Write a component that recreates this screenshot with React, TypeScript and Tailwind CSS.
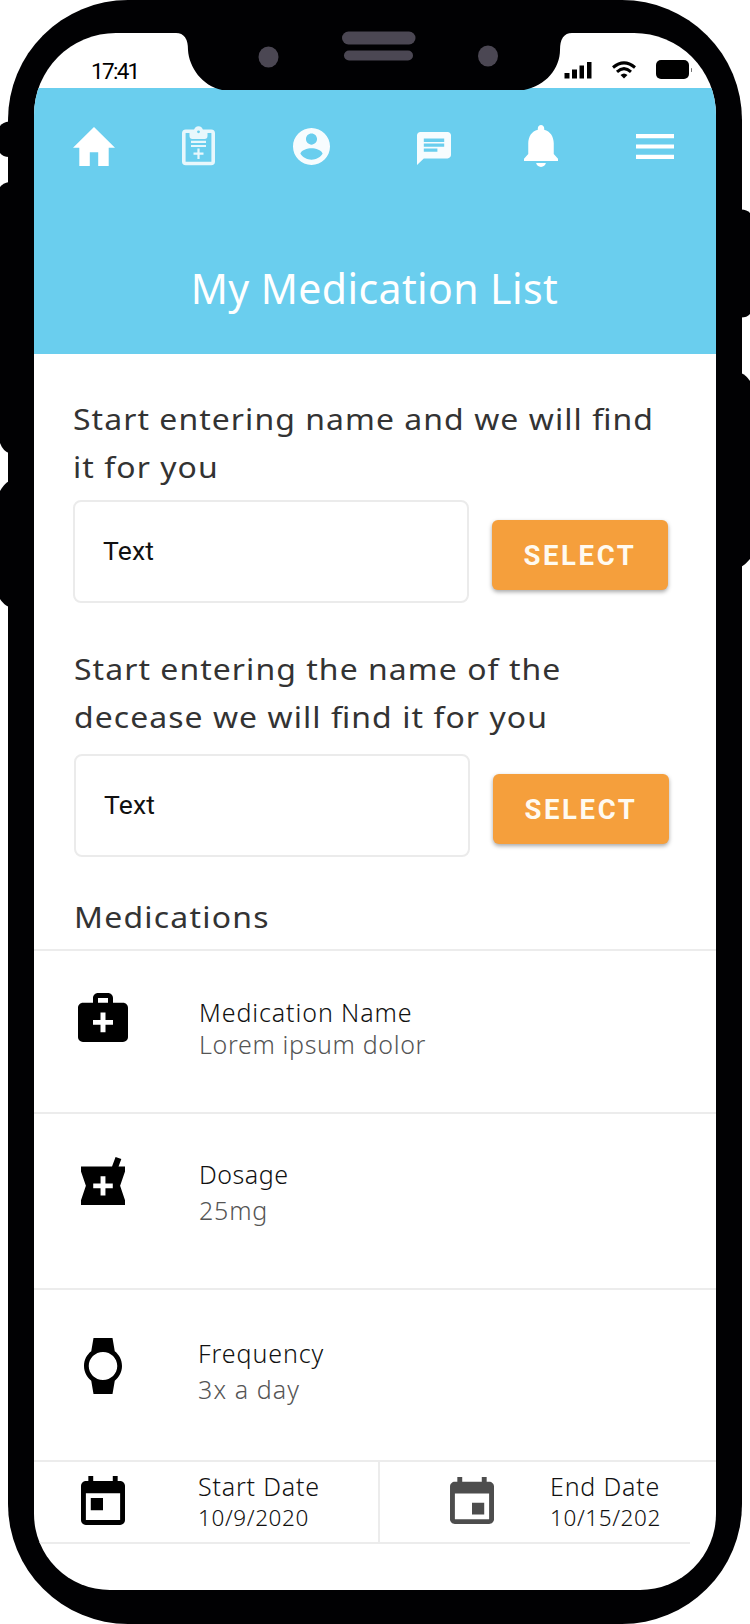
import React from "react";
import type { ReactNode } from "react";

type GlyphProps = { box: string; d: string; className: string };

function Glyph({ box, d, className }: GlyphProps) {
  return (
    <svg viewBox={box} preserveAspectRatio="none" fill="currentColor" className={`block shrink-0 ${className}`} aria-hidden="true">
      <path d={d} />
    </svg>
  );
}

const HOME = "M10 20v-6h4v6h5v-8h3L12 3 2 12h3v8z";
const ACCOUNT =
  "M12 2C6.48 2 2 6.48 2 12s4.48 10 10 10 10-4.48 10-10S17.52 2 12 2zm0 3c1.66 0 3 1.34 3 3s-1.34 3-3 3-3-1.34-3-3 1.34-3 3-3zm0 14.2c-2.5 0-4.71-1.28-6-3.22.03-1.99 4-3.08 6-3.08 1.99 0 5.97 1.09 6 3.08-1.29 1.94-3.5 3.22-6 3.22z";
const CHAT =
  "M20 2H4c-1.1 0-1.99.9-1.99 2L2 22l4-4h14c1.1 0 2-.9 2-2V4c0-1.1-.9-2-2-2zM6 9h12v2H6V9zm8 5H6v-2h8v2zm4-6H6V6h12v2z";
const BELL =
  "M12 22c1.2 0 2.1-.7 2.3-1.8H9.7C9.9 21.3 10.8 22 12 22zm6-6v-5c0-3.07-1.64-5.64-4.5-6.32V4c0-.83-.67-1.5-1.5-1.5s-1.5.67-1.5 1.5v.68C7.63 5.36 6 7.92 6 11v5l-2 2.2v1h16v-1L18 16z";
const MENU = "M0 0h38v4H0zM0 10h38v4H0zM0 20h38v4H0z";
const CASE =
  "M20 6h-4V4c0-1.1-.9-2-2-2h-4c-1.1 0-2 .9-2 2v2H4c-1.1 0-2 .9-2 2v12c0 1.1.9 2 2 2h16c1.1 0 2-.9 2-2V8c0-1.1-.9-2-2-2zM10 4h4v2h-4V4zm6 11h-3v3h-2v-3H8v-2h3v-3h2v3h3v2z";
const MORTAR =
  "M21 5h-2.64l1.14-3.14L17.15 1l-1.46 4H3v2l2 6-2 6v2h18v-2l-2-6 2-6V5zm-5 9h-3v3h-2v-3H8v-2h3V9h2v3h3v2z";
const WATCH =
  "M20 12c0-2.54-1.19-4.81-3.04-6.27L16 0H8l-.95 5.73C5.19 7.19 4 9.45 4 12s1.19 4.81 3.05 6.27L8 24h8l.96-5.73C18.81 16.81 20 14.54 20 12zM6 12c0-3.31 2.69-6 6-6s6 2.69 6 6-2.69 6-6 6-6-2.69-6-6z";
const TODAY =
  "M19 3h-1V1h-2v2H8V1H6v2H5c-1.11 0-1.99.9-1.99 2L3 19c0 1.1.89 2 2 2h14c1.1 0 2-.9 2-2V5c0-1.1-.9-2-2-2zm0 16H5V8h14v11zM7 10h5v5H7z";
const EVENT =
  "M17 12h-5v5h5v-5zM16 1v2H8V1H6v2H5c-1.11 0-1.99.9-1.99 2L3 19c0 1.1.89 2 2 2h14c1.1 0 2-.9 2-2V5c0-1.1-.9-2-2-2h-1V1h-2zm3 18H5V8h14v11z";

function ClipboardIcon() {
  return (
    <svg viewBox="0 0 33 40" className="ml-[67px] block h-10 w-[33px] shrink-0 opacity-85" fill="none" stroke="white" aria-hidden="true">
      <rect x="1.8" y="5.3" width="29.4" height="32.2" rx="2" strokeWidth="3.6" />
      <path d="M7.500 5v5q0 3 3 3h12q3 0 3-3V5h-4.500a4.500 4.800 0 0 0-9 0z" fill="white" stroke="none" />
      <circle cx="16.500" cy="5.800" r="1.400" fill="#6aceee" stroke="none" />
      <path d="M9 15.800h15M9 20h15" strokeWidth="2.200" />
      <path d="M16.500 22.500v10.500M11.500 27.700h10" strokeWidth="2.200" />
    </svg>
  );
}

function StatusBar() {
  return (
    <div className="flex h-[55px] items-start pl-[57px] pt-[22px] font-[Roboto,sans-serif] text-black">
      <span className="w-[473px] text-[22.500px] leading-[32px] tracking-[-1.700px]">17:41</span>
      <svg viewBox="0 0 28 18" className="mt-[6px] h-[18px] w-7" aria-hidden="true">
        <path d="M0.500 12h5v5.500h-5zM8 8.500h5v9H8zM15.500 4.500h4.500v13h-4.500zM23 1h4.500v16.500H23z" />
      </svg>
      <svg viewBox="0 0 24 18" className="ml-5 mt-[6px] h-[18px] w-6" fill="none" stroke="black" aria-hidden="true">
        <path d="M1 6.500Q12-2.800 23 6.500" strokeWidth="3" />
        <path d="M5 10.800Q12 4.500 19 10.800" strokeWidth="3" />
        <path d="M8.500 14Q12 10.800 15.500 14L12 17.500z" fill="black" stroke="none" />
      </svg>
      <span className="ml-[20px] mt-[5px] h-[19px] w-[33px] rounded-[5px] bg-black" />
      <span className="ml-[2px] mt-[13px] h-1 w-px rounded bg-neutral-500" />
    </div>
  );
}

function Header() {
  return (
    <header className="h-[266px] bg-[#6aceee] pt-9 text-white">
      <nav className="flex h-[44px] items-center pl-[39px]">
        <Glyph box="2 3 20 17" d={HOME} className="h-[39px] w-[42px]" />
        <ClipboardIcon />
        <Glyph box="2 2 20 20" d={ACCOUNT} className="ml-[78px] h-[37px] w-[37px] opacity-95" />
        <Glyph box="2 2 20 20" d={CHAT} className="ml-[87px] mt-[4px] h-[33px] w-[34px] opacity-95" />
        <Glyph box="4 2.5 16 19.5" d={BELL} className="ml-[73px] h-[42px] w-[34px]" />
        <Glyph box="0 0 38 24" d={MENU} className="ml-[78px] h-[25px] w-[38px]" />
      </nav>
      <h1 className="mt-[96px] pr-px text-center text-[41px] leading-[48px] tracking-[0.400px]">My Medication List</h1>
    </header>
  );
}

function SearchField({ children, shifted = false }: { children: ReactNode; shifted?: boolean }) {
  return (
    <section className={shifted ? "pl-[40px] pt-[42px]" : "pl-[39px] pt-[41px]"}>
      <p className="w-[560px] origin-left scale-x-[1.12] text-[28.500px] leading-[48px] tracking-[0.950px] text-[#333]">{children}</p>
      <div className={`flex items-start ${shifted ? "mt-[13px]" : "mt-[9px]"}`}>
        <div className="h-[103px] w-[396px] rounded-lg border-2 border-[#ebebeb] pl-[28px] pt-[32px] font-[Roboto,sans-serif] text-[26.500px] leading-[34px] tracking-[0.200px] text-[#111]">
          Text
        </div>
        <button className="ml-[23px] mt-5 h-[70px] w-[176px] rounded-md bg-[#f59f3c] pt-[2px] font-[Roboto,sans-serif] text-[27.500px] font-bold leading-[68px] tracking-[2.600px] text-[#fffaf0] shadow-[0_2px_4px_rgba(0,0,0,0.35)]">
          SELECT
        </button>
      </div>
    </section>
  );
}

const ligature = <span className="tracking-normal">fi</span>;

export default function App() {
  return (
    <div className="relative h-[1624px] w-[750px] overflow-hidden bg-white pl-2 font-['Noto_Sans',sans-serif]">
      <div className="h-[1624px] w-[734px] rounded-[120px] bg-[#010103] pl-[26px] pt-[33px]">
        <main className="h-[1557px] w-[682px] overflow-hidden rounded-b-[76px] rounded-t-[82px] bg-white">
          <StatusBar />
          <Header />
          <SearchField>
            Start entering name and we will {ligature}
            <span className="ml-px">nd</span>
            <br />
            it for you
          </SearchField>
          <SearchField shifted>
            Start entering the name of the
            <br />
            decease we will {ligature}
            <span className="ml-px">nd</span> it for you
          </SearchField>
          <h2 className="ml-[40px] mt-[36px] h-[56px] w-[560px] origin-left scale-x-[1.12] text-[28.500px] leading-[48px] tracking-[1.100px] text-[#333]">
            Medications
          </h2>

          <div className="flex h-[163px] border-t-2 border-[#ececec]">
            <div className="w-[165px] pl-[44px] pt-[42px]">
              <Glyph box="2 2 20 20" d={CASE} className="h-[49px] w-[50px]" />
            </div>
            <div className="pt-[45px] text-[25px] font-light leading-[32px]">
              <p className="tracking-[0.900px] text-[#111]">Medication Name</p>
              <p className="tracking-[0.650px] text-[#555]">Lorem ipsum dolor</p>
            </div>
          </div>
          <div className="flex h-[176px] border-t-2 border-[#ececec]">
            <div className="w-[165px] pl-[47px] pt-[43px]">
              <Glyph box="3 1 18 20" d={MORTAR} className="h-[48px] w-[44px]" />
            </div>
            <div className="pt-[44px] text-[25px] font-light leading-[36px]">
              <p className="-mt-[2px] tracking-[0.500px] text-[#111]">Dosage</p>
              <p className="tracking-[0.800px] text-[#555]">25mg</p>
            </div>
          </div>
          <div className="flex h-[172px] border-t-2 border-[#ececec]">
            <div className="w-[164px] pl-[50px] pt-[48px]">
              <Glyph box="4 0 16 24" d={WATCH} className="h-[56px] w-[38px]" />
            </div>
            <div className="pt-[45px] text-[25px] font-light leading-[36px]">
              <p className="tracking-[0.900px] text-[#111]">Frequency</p>
              <p className="tracking-[1.100px] text-[#555]">3x a day</p>
            </div>
          </div>
          <div className="flex h-[84px] border-t-2 border-[#ececec]">
            <div className="flex w-[346px] border-b-2 border-r-2 border-[#ececec]">
              <div className="w-[164px] pl-[47px] pt-[14px]">
                <Glyph box="3 1 18 20" d={TODAY} className="h-[49px] w-[44px]" />
              </div>
              <div className="pt-2 font-light text-[#111]">
                <p className="text-[25px] leading-[32px] tracking-[0.800px]">Start Date</p>
                <p className="mt-px text-[22.500px] leading-[30px] tracking-[0.600px]">10/9/2020</p>
              </div>
            </div>
            <div className="flex w-[310px] border-b-2 border-[#ececec]">
              <div className="w-[170px] pl-[70px] pt-[15px] text-[#4d4d4d]">
                <Glyph box="3 1 18 20" d={EVENT} className="h-[47px] w-[44px]" />
              </div>
              <div className="pt-2 font-light text-[#111]">
                <p className="text-[25px] leading-[32px] tracking-[0.800px]">End Date</p>
                <p className="mt-px text-[22.500px] leading-[30px] tracking-[0.600px]">10/15/202</p>
              </div>
            </div>
          </div>
        </main>
      </div>

      <svg viewBox="0 0 750 1624" className="pointer-events-none absolute left-0 top-0 h-[1624px] w-[750px]" aria-hidden="true">
        <g fill="#010103">
          <path d="M176 30v3q12 0 12 17c1 17 14 36 34 40h302c22-4 36-22 36-40q0-17 12-17v-3z" />
          <path d="M9 121.500Q3 122 0 126v27q3 4 9 4z" />
          <path d="M9 182Q3 183 0 187v256q3 8 9 10z" />
          <path d="M9 481Q4 484 0 491v108q3 5 9 8z" />
          <path d="M741 209.500q6 0 9 3.500v101q-3 3.500-9 3.500z" />
          <path d="M741 373q5 2 9 8v178q-4 5-9 8z" />
        </g>
        <g fill="#4b4753">
          <ellipse cx="268.500" cy="57" rx="10" ry="10.500" />
          <ellipse cx="488" cy="56" rx="10" ry="10.500" />
          <rect x="342" y="31.500" width="73.500" height="13" rx="6.500" />
          <rect x="344" y="50.500" width="69" height="10" rx="5" />
        </g>
      </svg>
    </div>
  );
}
